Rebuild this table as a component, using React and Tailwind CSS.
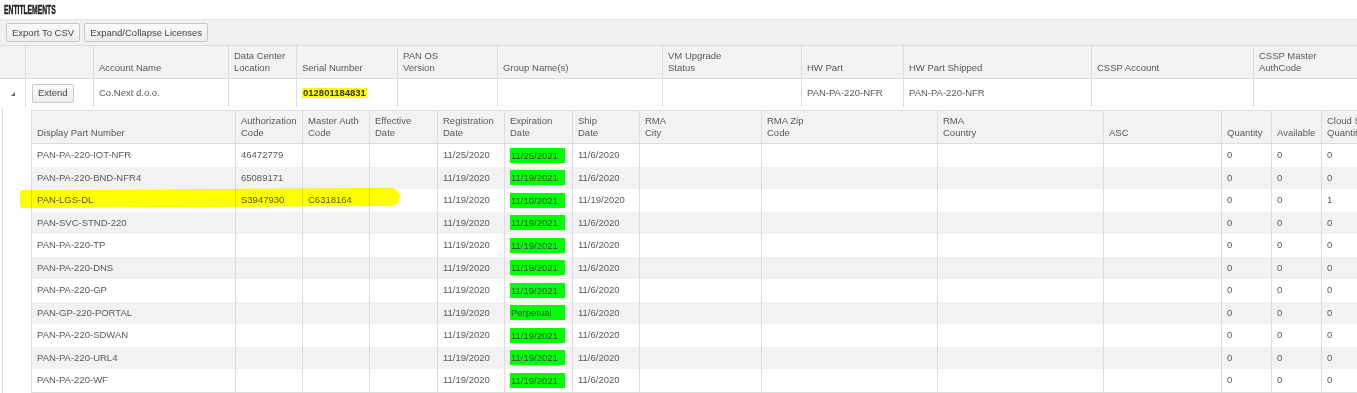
import React from "react";

const outerCols = [
  { w: "w-[26px]", label: "" },
  { w: "w-[68px]", label: "" },
  { w: "w-[135px]", label: ["Account Name"] },
  { w: "w-[68px]", label: ["Data Center", "Location"] },
  { w: "w-[101px]", label: ["Serial Number"] },
  { w: "w-[100px]", label: ["PAN OS", "Version"] },
  { w: "w-[165px]", label: ["Group Name(s)"] },
  { w: "w-[139px]", label: ["VM Upgrade", "Status"] },
  { w: "w-[102px]", label: ["HW Part"] },
  { w: "w-[188px]", label: ["HW Part Shipped"] },
  { w: "w-[162px]", label: ["CSSP Account"] },
  { w: "w-[150px]", label: ["CSSP Master", "AuthCode"] },
];

const innerCols = [
  { w: "w-[204px]", label: ["Display Part Number"] },
  { w: "w-[67px]", label: ["Authorization", "Code"] },
  { w: "w-[67px]", label: ["Master Auth", "Code"] },
  { w: "w-[68px]", label: ["Effective", "Date"] },
  { w: "w-[67px]", label: ["Registration", "Date"] },
  { w: "w-[68px]", label: ["Expiration", "Date"] },
  { w: "w-[67px]", label: ["Ship", "Date"] },
  { w: "w-[122px]", label: ["RMA", "City"] },
  { w: "w-[176px]", label: ["RMA Zip", "Code"] },
  { w: "w-[166px]", label: ["RMA", "Country"] },
  { w: "w-[118px]", label: ["ASC"] },
  { w: "w-[50px]", label: ["Quantity"] },
  { w: "w-[50px]", label: ["Available"] },
  { w: "w-[90px]", label: ["Cloud Storage", "Quantity"] },
];

const rows = [
  ["PAN-PA-220-IOT-NFR", "46472779", "", "", "11/25/2020", "11/25/2021", "11/6/2020", "", "", "", "", "0", "0", "0"],
  ["PAN-PA-220-BND-NFR4", "65089171", "", "", "11/19/2020", "11/19/2021", "11/6/2020", "", "", "", "", "0", "0", "0"],
  ["PAN-LGS-DL", "S3947930", "C6318164", "", "11/19/2020", "11/10/2021", "11/19/2020", "", "", "", "", "0", "0", "1"],
  ["PAN-SVC-STND-220", "", "", "", "11/19/2020", "11/19/2021", "11/6/2020", "", "", "", "", "0", "0", "0"],
  ["PAN-PA-220-TP", "", "", "", "11/19/2020", "11/19/2021", "11/6/2020", "", "", "", "", "0", "0", "0"],
  ["PAN-PA-220-DNS", "", "", "", "11/19/2020", "11/19/2021", "11/6/2020", "", "", "", "", "0", "0", "0"],
  ["PAN-PA-220-GP", "", "", "", "11/19/2020", "11/19/2021", "11/6/2020", "", "", "", "", "0", "0", "0"],
  ["PAN-GP-220-PORTAL", "", "", "", "11/19/2020", "Perpetual", "11/6/2020", "", "", "", "", "0", "0", "0"],
  ["PAN-PA-220-SDWAN", "", "", "", "11/19/2020", "11/19/2021", "11/6/2020", "", "", "", "", "0", "0", "0"],
  ["PAN-PA-220-URL4", "", "", "", "11/19/2020", "11/19/2021", "11/6/2020", "", "", "", "", "0", "0", "0"],
  ["PAN-PA-220-WF", "", "", "", "11/19/2020", "11/19/2021", "11/6/2020", "", "", "", "", "0", "0", "0"],
];

function HeaderCell({ w, label }) {
  return (
    <div className={`${w} shrink-0 h-full flex flex-col justify-end px-[5px] pb-[4px] leading-[12px] border-r border-[#dcdcdc] whitespace-nowrap overflow-hidden`}>
      {label.map((l, i) => (
        <span key={i}>{l}</span>
      ))}
    </div>
  );
}

function Btn({ children }) {
  return (
    <button className="h-[19px] px-[5px] border border-[#c8c8c8] rounded-[2px] bg-gradient-to-b from-[#fbfbfb] to-[#ececec] text-[#444] leading-none">
      {children}
    </button>
  );
}

export default function App() {
  return (
    <div className="relative w-[1357px] h-[393px] overflow-hidden bg-white font-['Liberation_Sans',Arial,sans-serif] text-[9.5px] text-[#585858]">
      {/* Title */}
      <div className="h-[19px] flex items-center pl-[4px] pt-[1px]">
        <span className="inline-block origin-left scale-x-[0.5] text-[13.5px] leading-none font-bold text-[#222] [-webkit-text-stroke:0.5px_#222] whitespace-nowrap">
          ENTITLEMENTS
        </span>
      </div>

      {/* Toolbar */}
      <div className="h-[26px] flex items-center gap-[4px] px-[6px] bg-[#f0f0f0] border-t border-[#e6e6e6]">
        <Btn>Export To CSV</Btn>
        <Btn>Expand/Collapse Licenses</Btn>
      </div>

      {/* Outer header */}
      <div className="flex h-[34px] w-max bg-[#f2f2f2] border-y border-[#dcdcdc]">
        {outerCols.map((c, i) => (
          <HeaderCell key={i} w={c.w} label={c.label || [""]} />
        ))}
      </div>

      {/* Outer data row */}
      <div className="flex h-[28px] w-max bg-white">
        <div className="w-[26px] shrink-0 h-full flex items-center justify-center border-r border-[#dcdcdc]">
          <svg width="5" height="5" viewBox="0 0 5 5">
            <polygon points="5,1 5,5 1,5" fill="#666" />
          </svg>
        </div>
        <div className="w-[68px] shrink-0 h-full flex items-center pl-[6px] border-r border-[#dcdcdc]">
          <Btn>Extend</Btn>
        </div>
        <div className="w-[135px] shrink-0 h-full flex items-center px-[5px] border-r border-[#dcdcdc]">Co.Next d.o.o.</div>
        <div className="w-[68px] shrink-0 h-full border-r border-[#dcdcdc]"></div>
        <div className="w-[101px] shrink-0 h-full flex items-center px-[5px] border-r border-[#dcdcdc]">
          <span className="bg-[#ffff00] font-bold text-[#333] leading-[10px] px-[1px]">012801184831</span>
        </div>
        <div className="w-[100px] shrink-0 h-full border-r border-[#dcdcdc]"></div>
        <div className="w-[165px] shrink-0 h-full border-r border-[#dcdcdc]"></div>
        <div className="w-[139px] shrink-0 h-full border-r border-[#dcdcdc]"></div>
        <div className="w-[102px] shrink-0 h-full flex items-center px-[5px] border-r border-[#dcdcdc]">PAN-PA-220-NFR</div>
        <div className="w-[188px] shrink-0 h-full flex items-center px-[5px] border-r border-[#dcdcdc]">PAN-PA-220-NFR</div>
        <div className="w-[162px] shrink-0 h-full border-r border-[#dcdcdc]"></div>
        <div className="w-[150px] shrink-0 h-full"></div>
      </div>

      {/* Nested licenses */}
      <div className="ml-[2px] border-l border-[#dcdcdc] pl-[28px] pt-[3px] w-max">
        <div className="border-l border-[#dcdcdc] w-max">
          <div className="flex h-[34px] bg-[#f2f2f2] border-y border-[#dcdcdc]">
            {innerCols.map((c, i) => (
              <HeaderCell key={i} w={c.w} label={c.label} />
            ))}
          </div>
          {rows.map((r, ri) => (
            <div
              key={ri}
              className={`flex h-[22.5px] ${ri % 2 === 1 ? "bg-[#f2f2f2]" : "bg-white"}`}
            >
              {r.map((v, ci) => (
                <div
                  key={ci}
                  className={`${innerCols[ci].w} shrink-0 h-full flex items-center px-[5px] border-r border-[#dcdcdc] whitespace-nowrap overflow-hidden`}
                >
                  {ci === 5 ? (
                    <span className="inline-block w-[55px] h-[15px] leading-[15px] bg-[#00ff00] text-[#3a4a3a] pl-[1px]">{v}</span>
                  ) : (
                    v
                  )}
                </div>
              ))}
            </div>
          ))}
          <div className="border-b border-[#dcdcdc]"></div>
        </div>
      </div>

      {/* Highlighter stroke over PAN-LGS-DL row */}
      <div className="absolute left-[20px] top-[189px] w-[380px] h-[18px] bg-[#ffff00] mix-blend-multiply rounded-l-[3px] rounded-r-[9px] -rotate-[0.3deg] pointer-events-none"></div>
    </div>
  );
}
